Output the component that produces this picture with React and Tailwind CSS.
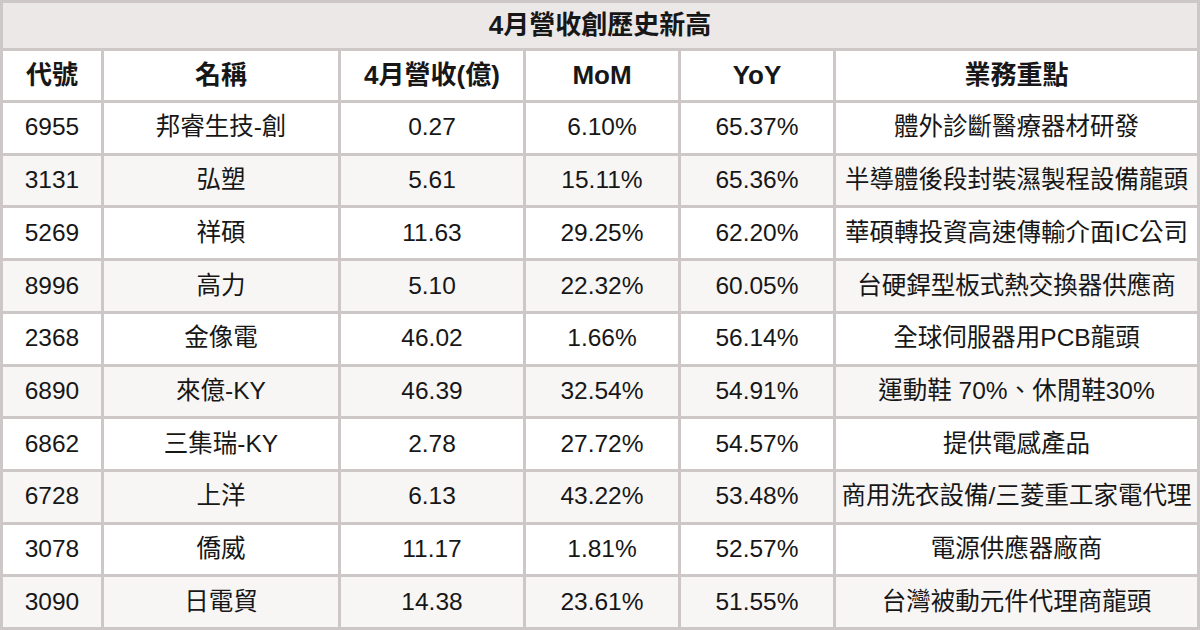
import React from "react";

const rows = [
  ["6955", "邦睿生技-創", "0.27", "6.10%", "65.37%", "體外診斷醫療器材研發"],
  ["3131", "弘塑", "5.61", "15.11%", "65.36%", "半導體後段封裝濕製程設備龍頭"],
  ["5269", "祥碩", "11.63", "29.25%", "62.20%", "華碩轉投資高速傳輸介面IC公司"],
  ["8996", "高力", "5.10", "22.32%", "60.05%", "台硬銲型板式熱交換器供應商"],
  ["2368", "金像電", "46.02", "1.66%", "56.14%", "全球伺服器用PCB龍頭"],
  ["6890", "來億-KY", "46.39", "32.54%", "54.91%", "運動鞋 70%、休閒鞋30%"],
  ["6862", "三集瑞-KY", "2.78", "27.72%", "54.57%", "提供電感產品"],
  ["6728", "上洋", "6.13", "43.22%", "53.48%", "商用洗衣設備/三菱重工家電代理"],
  ["3078", "僑威", "11.17", "1.81%", "52.57%", "電源供應器廠商"],
  ["3090", "日電貿", "14.38", "23.61%", "51.55%", "台灣被動元件代理商龍頭"],
];

const headers = ["代號", "名稱", "4月營收(億)", "MoM", "YoY", "業務重點"];

export default function App() {
  return (
    <div
      className="w-[1200px] h-[630px] bg-[#cdc8c7] p-[3px] grid gap-[3px] grid-cols-[98px_234px_182px_152px_152px_361px] grid-rows-[45px_49px_repeat(10,1fr)] text-[#171717]"
      style={{ fontFamily: '"Liberation Sans", "Noto Sans CJK TC", sans-serif' }}
    >
      <div className="col-span-6 bg-[#ece8e7] flex items-center justify-center text-[26px] font-bold">
        4月營收創歷史新高
      </div>
      {headers.map((h) => (
        <div key={h} className="bg-white flex items-center justify-center text-[26px] font-bold">
          {h}
        </div>
      ))}
      {rows.map((r, i) =>
        r.map((c, j) => (
          <div
            key={`${i}-${j}`}
            className={`flex items-center justify-center text-[24.5px] whitespace-nowrap ${
              i % 2 === 1 ? "bg-[#f7f6f5]" : "bg-white"
            }`}
          >
            {c}
          </div>
        ))
      )}
    </div>
  );
}
